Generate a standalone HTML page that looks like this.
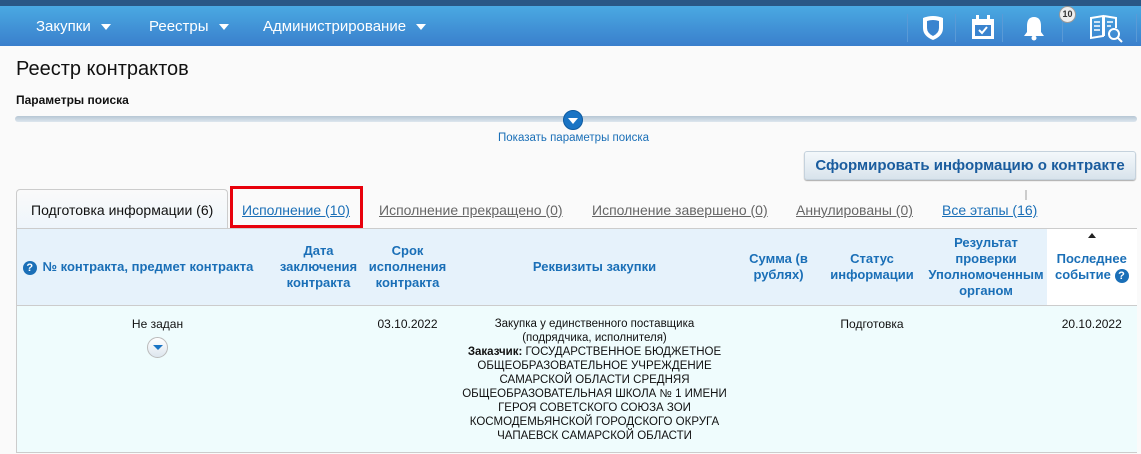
<!DOCTYPE html>
<html><head><meta charset="utf-8"><style>
*{box-sizing:border-box;margin:0;padding:0}
body{width:1141px;height:454px;overflow:hidden;background:#fafafa;font-family:"Liberation Sans","DejaVu Sans",sans-serif;font-size:12.5px;color:#111;position:relative}
.a{position:absolute}
.top{left:0;top:0;width:1141px;height:6px;background:#2a5785}
.nav{left:0;top:6px;width:1141px;height:40px;background:linear-gradient(#4aa9e2,#3a7fcc)}
.nav span{position:absolute;top:12px;color:#fff;font-size:15px}
.tri{display:inline-block;width:0;height:0;border-left:5px solid transparent;border-right:5px solid transparent;border-top:6px solid #fff;margin-left:10px;vertical-align:middle}
.sep{position:absolute;top:8px;width:1px;height:28px;background:#5a9ad6}
.tab{top:202px;font-size:14px;text-decoration:underline;color:#666}
table{table-layout:fixed}
th{font-weight:bold;color:#1a6fb7;font-size:13px;text-align:center;vertical-align:middle;line-height:16px}
td{text-align:center;vertical-align:top;padding-top:11px;line-height:14px;font-size:12px;white-space:nowrap}
</style></head><body>
<div class="a top"></div>
<div class="a nav">
<span style="left:36px">Закупки<i class="tri"></i></span>
<span style="left:149px">Реестры<i class="tri"></i></span>
<span style="left:263px">Администрирование<i class="tri"></i></span>
<div class="sep" style="left:907px"></div><div class="sep" style="left:955px"></div><div class="sep" style="left:1002px"></div><div class="sep" style="left:1062px"></div><div class="sep" style="left:1136px"></div>
<svg class="a" style="left:920px;top:8px" width="26" height="28" viewBox="0 0 26 28"><path d="M3 4 Q13 0 23 4 V14 Q23 22 13 26 Q3 22 3 14Z" fill="#fff"/><path d="M7 7 Q13 5 19 7 V14 Q19 19 13 22 Q7 19 7 14Z" fill="#3a84cf"/></svg>
<svg class="a" style="left:970px;top:8px" width="26" height="28" viewBox="0 0 26 28"><rect x="2" y="5" width="22" height="20" fill="#fff"/><rect x="6" y="1" width="3" height="6" fill="#fff"/><rect x="17" y="1" width="3" height="6" fill="#fff"/><rect x="5" y="11" width="16" height="11" fill="#3a84cf"/><path d="M9 16 l3 3 l5 -6" stroke="#fff" stroke-width="2" fill="none"/></svg>
<svg class="a" style="left:1020px;top:8px" width="28" height="28" viewBox="0 0 28 28"><path d="M14 3 Q7 3 7 12 V18 L4 22 H24 L21 18 V12 Q21 3 14 3Z" fill="#fff"/><circle cx="14" cy="24" r="2.5" fill="#fff"/></svg>
<div class="a" style="left:1059px;top:0px;width:17px;height:17px;border-radius:50%;background:#eee;border:1px solid #999;font-size:9px;font-weight:bold;color:#333;text-align:center;line-height:15px">10</div>
<svg class="a" style="left:1089px;top:8px" width="36" height="30" viewBox="0 0 36 30"><path d="M2 4 L14 2 L14 22 L2 24Z M15 2 L27 4 L27 14 M15 2 V22" stroke="#fff" stroke-width="2" fill="none"/><path d="M5 8h6M5 12h6M5 16h6M18 8h6M18 12h4" stroke="#fff" stroke-width="1.5"/><circle cx="25" cy="20" r="5" stroke="#fff" stroke-width="2" fill="none"/><path d="M29 24 l4 4" stroke="#fff" stroke-width="2"/></svg>
</div>
<div class="a" style="left:16px;top:58px;font-size:20px;color:#111">Реестр контрактов</div>
<div class="a" style="left:16px;top:93px;font-size:12px;font-weight:bold">Параметры поиска</div>
<div class="a" style="left:15px;top:116px;width:1122px;height:6px;border-radius:3px;background:linear-gradient(#b6c6d4,#dde6ee)"></div>
<div class="a" style="left:563px;top:110px;width:20px;height:20px;border-radius:50%;background:#1a74c4;border:1px solid #0d5aa0"><i style="position:absolute;left:4px;top:7px;border-left:5px solid transparent;border-right:5px solid transparent;border-top:6px solid #fff"></i></div>
<div class="a" style="left:498px;top:132px;font-size:11.5px;color:#1a6fb7">Показать параметры поиска</div>
<div class="a" style="left:804px;top:151px;width:332px;height:29px;border-radius:3px;background:linear-gradient(#f4f8fb,#d8e3ec);border:1px solid #c5d2dd;box-shadow:0 1px 1px #aaa;font-size:15px;font-weight:bold;color:#1a5c9e;text-align:center;line-height:27px">Сформировать информацию о контракте</div>
<div class="a" style="left:1025px;top:190px;width:2px;height:10px;background:#ccc"></div>
<div class="a" style="left:16px;top:189px;width:212px;height:40px;border:1px solid #ccc;border-bottom:none;border-radius:4px 4px 0 0;background:linear-gradient(#fafafa,#eef5fb)"></div>
<div class="a" style="left:31px;top:202px;font-size:14px">Подготовка информации (6)</div>
<div class="a" style="left:230px;top:186px;width:133px;height:42px;border:3px solid #e8000b"></div>
<div class="a tab" style="left:242px;color:#1a6fb7">Исполнение (10)</div>
<div class="a tab" style="left:379px">Исполнение прекращено (0)</div>
<div class="a tab" style="left:592px">Исполнение завершено (0)</div>
<div class="a tab" style="left:796px">Аннулированы (0)</div>
<div class="a tab" style="left:942px;color:#1a6fb7">Все этапы (16)</div>
<table class="a" style="left:16px;top:228px;width:1121px;border-collapse:collapse;border-top:1px solid #ccc;border-bottom:1px solid #ccc;border-left:1px solid #ccc">
<tr style="height:77px;background:#e6f2fb;border-bottom:1px solid #ccc">
<th style="width:26px"><span style="display:inline-block;width:14px;height:14px;border-radius:50%;background:#1a6fb7;color:#fff;font-size:11px;line-height:14px">?</span></th>
<th style="width:230px;text-align:left;white-space:nowrap">№ контракта, предмет контракта</th>
<th style="width:92px">Дата заключения контракта</th>
<th style="width:86px">Срок исполнения контракта</th>
<th style="width:288px">Реквизиты закупки</th>
<th style="width:80px">Сумма (в рублях)</th>
<th style="width:107px">Статус информации</th>
<th style="width:121px">Результат проверки Уполномоченным органом</th>
<th style="background:#fff;position:relative">Последнее событие <span style="display:inline-block;width:14px;height:14px;border-radius:50%;background:#1a6fb7;color:#fff;font-size:11px;line-height:14px">?</span><i style="position:absolute;left:41px;top:4px;border-left:4px solid transparent;border-right:4px solid transparent;border-bottom:5px solid #222"></i></th>
</tr>
<tr style="height:147px;background:#effcfd">
<td></td>
<td>Не задан<br><span style="display:inline-block;margin-top:6px;width:21px;height:21px;border-radius:50%;background:linear-gradient(#fff,#dde6ee);border:1px solid #bbb;position:relative"><i style="position:absolute;left:5px;top:7px;border-left:5px solid transparent;border-right:5px solid transparent;border-top:5px solid #1a74c4"></i></span></td>
<td></td>
<td>03.10.2022</td>
<td style="font-size:11.5px">Закупка у единственного поставщика<br>(подрядчика, исполнителя)<br><b>Заказчик:</b> ГОСУДАРСТВЕННОЕ БЮДЖЕТНОЕ<br>ОБЩЕОБРАЗОВАТЕЛЬНОЕ УЧРЕЖДЕНИЕ<br>САМАРСКОЙ ОБЛАСТИ СРЕДНЯЯ<br>ОБЩЕОБРАЗОВАТЕЛЬНАЯ ШКОЛА № 1 ИМЕНИ<br>ГЕРОЯ СОВЕТСКОГО СОЮЗА ЗОИ<br>КОСМОДЕМЬЯНСКОЙ ГОРОДСКОГО ОКРУГА<br>ЧАПАЕВСК САМАРСКОЙ ОБЛАСТИ</td>
<td></td>
<td>Подготовка</td>
<td></td>
<td>20.10.2022</td>
</tr>
</table>
</body></html>
